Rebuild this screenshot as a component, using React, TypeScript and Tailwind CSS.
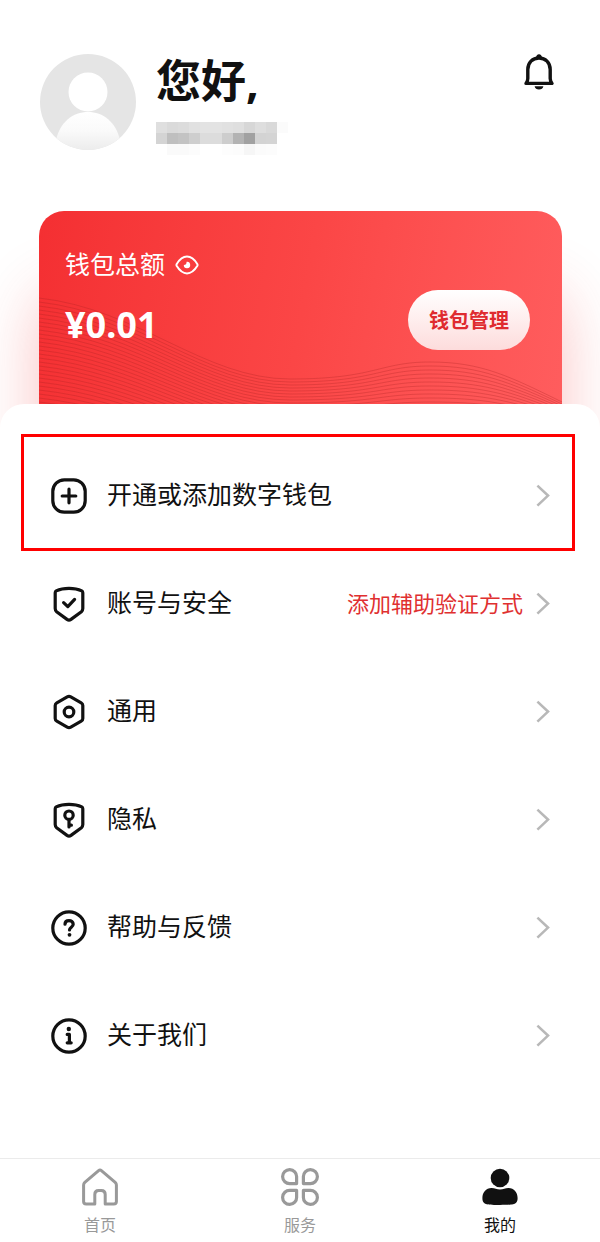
import React from 'react';

const MOSAIC = [
  ['#dfdfdf', '#dadada', '#dcdcdc', '#e1e1e1', '#e3e3e3', '#e3e3e3', '#e1e1e1', '#dfdfdf', '#d7d7d7', '#dedede', '#d9d9d9', '#fbfbfb'],
  ['#d4d4d4', '#bfbfbf', '#c3c3c3', '#cecece', '#dcdcdc', '#dcdcdc', '#cdcdcd', '#b3b3b3', '#a1a1a1', '#d3d3d3', '#d4d4d4', '#ffffff'],
  ['#ffffff', '#fafafa', '#fafafa', '#fcfcfc', '#ffffff', '#ffffff', '#fdfdfd', '#fcfcfc', '#f6f6f6', '#fbfbfb', '#fcfcfc', '#ffffff'],
];

const SHIELD = 'M18 2.3C23 2.3 27.5 3.3 30.8 4.9Q31.8 5.4 31.8 6.8V22.6Q31.8 24.6 30.4 25.7L20 33.4Q18 34.8 16 33.4L5.6 25.7Q4.2 24.6 4.2 22.6V6.8Q4.2 5.4 5.2 4.9C8.5 3.3 13 2.3 18 2.3Z';

const MenuIcon = ({ children }: { children: React.ReactNode }) => (
  <svg
    className="size-9 shrink-0"
    viewBox="0 0 36 36"
    fill="none"
    stroke="currentColor"
    strokeWidth="3.2"
    strokeLinecap="round"
    strokeLinejoin="round"
    aria-hidden="true"
  >
    {children}
  </svg>
);

const menuItems = [
  {
    label: '开通或添加数字钱包',
    highlighted: true,
    icon: (
      <>
        <rect x="1.8" y="1.8" width="32.4" height="32.4" rx="11.5" />
        <path d="M18 11.2V24.8M11.2 18H24.8" />
      </>
    ),
  },
  {
    label: '账号与安全',
    note: '添加辅助验证方式',
    icon: (
      <>
        <path d={SHIELD} />
        <path d="M12.6 16.6L16.8 20.6L23.6 13.4" />
      </>
    ),
  },
  {
    label: '通用',
    icon: (
      <>
        <path d="M16.2 2.9Q18 1.9 19.8 2.9L30.2 8.8Q31.8 9.7 31.8 11.5V24.5Q31.8 26.3 30.2 27.2L19.8 33.1Q18 34.1 16.2 33.1L5.8 27.2Q4.2 26.3 4.2 24.5V11.5Q4.2 9.7 5.8 8.8Z" />
        <circle cx="18" cy="18" r="4.8" />
      </>
    ),
  },
  {
    label: '隐私',
    icon: (
      <>
        <path d={SHIELD} />
        <circle cx="18" cy="13.2" r="4.2" />
        <path d="M18 17.6V25M18.5 23.2H20.4" />
      </>
    ),
  },
  {
    label: '帮助与反馈',
    icon: (
      <>
        <circle cx="18" cy="18" r="16.2" />
        <path d="M14 14.2C14 11.8 15.8 10.6 18 10.6S22.2 12 22.2 14.3C22.2 17.2 18.5 17.2 18.5 20" />
        <circle cx="18.5" cy="24.8" r="1.9" fill="currentColor" stroke="none" />
      </>
    ),
  },
  {
    label: '关于我们',
    icon: (
      <>
        <circle cx="18" cy="18" r="16.2" />
        <circle cx="17.8" cy="11" r="2.2" fill="currentColor" stroke="none" />
        <path d="M16.2 16.4H18.4V24.6M16.2 24.8H20.2" />
      </>
    ),
  },
];

const tabs = [
  {
    label: '首页',
    active: false,
    icon: (
      <path
        d="M17.6 2.6Q19 1.4 20.4 2.6L34.2 14.4Q35.4 15.5 35.4 17V33.4Q35.4 36 32.8 36H24.2V26.4Q24.2 22.4 20.4 22.4H17.6Q13.8 22.4 13.8 26.4V36H5.2Q2.6 36 2.6 33.4V17Q2.6 15.5 3.8 14.4Z"
        fill="none"
        stroke="currentColor"
        strokeWidth="3"
        strokeLinejoin="round"
      />
    ),
  },
  {
    label: '服务',
    active: false,
    icon: (
      <g fill="none" stroke="currentColor" strokeWidth="3.2" strokeLinejoin="round">
        <path d="M15.6 15.6H9A7 7 0 1 1 15.6 9Z" />
        <path d="M22.4 15.6V9A7 7 0 1 1 29 15.6Z" />
        <path d="M15.6 22.4V29A7 7 0 1 1 9 22.4Z" />
        <path d="M22.4 22.4H29A7 7 0 1 1 22.4 29Z" />
      </g>
    ),
  },
  {
    label: '我的',
    active: true,
    icon: (
      <g fill="currentColor">
        <circle cx="19" cy="10" r="9.3" />
        <path d="M10.5 20C14 20 15.5 21.6 19 21.6S24 20 27.5 20C33 20 36.6 24.5 36.6 30C36.6 34 35.2 35.6 32 36.2C28 37.2 10 37.2 6 36.2C2.8 35.6 1.4 34 1.4 30C1.4 24.5 5 20 10.5 20Z" />
      </g>
    ),
  },
];

const Waves = () => (
  <svg
    className="absolute inset-0 size-full"
    viewBox="0 0 523 220"
    preserveAspectRatio="none"
    fill="none"
    stroke="#a82222"
    strokeOpacity="0.3"
    aria-hidden="true"
  >
    {Array.from({ length: 30 }, (_, i) => (
      <path
        key={i}
        d={`M0 ${87 + i * 4}C100 ${98 + i * 4} 165 ${168 + i * 3} 251 ${168 + i * 3}S340 ${151 + i * 4} 391 ${151 + i * 4}S470 ${165 + i * 3} 523 ${191 + i * 2}`}
      />
    ))}
  </svg>
);

const Header = () => (
  <header className="flex items-start px-10 pt-[54px]">
    <svg className="size-24 shrink-0" viewBox="0 0 96 96" role="img" aria-label="头像">
      <defs>
        <linearGradient id="body" x1="0" y1="0" x2="0" y2="1">
          <stop offset="0" stopColor="#ffffff" />
          <stop offset="0.5" stopColor="#fafafa" />
          <stop offset="1" stopColor="#ececec" />
        </linearGradient>
        <clipPath id="round">
          <circle cx="48" cy="48" r="48" />
        </clipPath>
      </defs>
      <g clipPath="url(#round)">
        <rect width="96" height="96" fill="#e5e5e5" />
        <circle cx="48" cy="38" r="19.5" fill="#ffffff" />
        <path d="M16 96V86C20 68 33 58 48 58S76 68 80 86V96Z" fill="url(#body)" />
      </g>
    </svg>
    <div className="ml-5 min-w-0 flex-1">
      <h1 className="font-['Noto_Sans','Noto_Sans_CJK_SC',sans-serif] text-[45px] leading-[54px] font-bold">您好,</h1>
      <div className="mt-3.5 grid w-[132px] grid-cols-12">
        {MOSAIC.flat().map((color, i) => (
          <span key={i} className="h-[11px]" style={{ backgroundColor: color }} />
        ))}
      </div>
    </div>
    <button type="button" aria-label="消息" className="-mr-1 shrink-0">
      <svg className="h-9 w-[50px]" viewBox="0 0 50 36" fill="none" stroke="currentColor" strokeWidth="3.4" strokeLinejoin="round">
        <path d="M12 29.4Q13.8 27 13.8 24.5V15.5C13.8 8.4 18.6 4 25 4S36.2 8.4 36.2 15.5V24.5Q36.2 27 38 29.4Z" />
        <path d="M25 0.2Q27.6 0.4 28.2 4H21.8Q22.4 0.4 25 0.2ZM20.6 32.2H29.4Q28.6 35.4 25 35.4T20.6 32.2Z" fill="currentColor" stroke="none" />
      </svg>
    </button>
  </header>
);

const WalletCard = () => (
  <section className="relative mr-[38px] ml-[39px] mt-14 flex h-[220px] items-start justify-between rounded-[25px] bg-linear-100 from-[#f42f32] via-[#fb4646] to-[#ff5d5e] px-[26px] text-white shadow-[0_84px_64px_0_rgba(240,50,50,0.3)]">
    <Waves />
    <div className="relative pt-[34px]">
      <div className="flex items-center gap-[10px]">
        <h2 className="text-[25px] leading-9">钱包总额</h2>
        <button type="button" aria-label="显示或隐藏金额" className="pt-1">
          <svg className="h-5 w-6" viewBox="0 0 24 20" fill="none" stroke="currentColor" strokeWidth="2" strokeLinecap="round" strokeLinejoin="round">
            <path d="M1.6 9.2C4.5 4.5 7.8 1.6 12 1.6S19.5 4.5 22.4 9.2Q22.8 10 22.4 10.8C19.5 15.5 16.2 18.4 12 18.4S4.5 15.5 1.6 10.8Q1.2 10 1.6 9.2Z" />
            <path d="M11.6 6.8A3.2 3.2 0 1 1 8.8 10Q11.6 10 11.6 6.8Z" fill="currentColor" stroke="none" />
          </svg>
        </button>
      </div>
      <p className="mt-[18px] font-['Noto_Sans','Noto_Sans_CJK_SC',sans-serif] text-[36px] leading-[52px] font-bold">¥0.01</p>
    </div>
    <button
      type="button"
      className="relative mt-[79px] mr-1.5 h-[60px] rounded-full bg-linear-to-b from-white to-[#fddcdc] px-[21px] text-[20px] font-bold text-[#df2b2f]"
    >
      钱包管理
    </button>
  </section>
);

const Menu = () => (
  <main className="relative -mt-[27px] flex-1 rounded-t-3xl bg-white pt-[38px]">
    <ul>
      {menuItems.map((item) => (
        <li key={item.label} className="relative">
          <a href="#" className="flex h-[108px] items-center pr-[49px] pl-[51px]">
            <MenuIcon>{item.icon}</MenuIcon>
            <span className="ml-5 pb-1.5 text-[25px] leading-9">{item.label}</span>
            {item.note && <span className="ml-auto pb-1 text-[22px] leading-8 text-[#e03030]">{item.note}</span>}
            <svg
              className={`h-6 w-4 shrink-0 ${item.note ? 'ml-3' : 'ml-auto'}`}
              viewBox="0 0 16 24"
              fill="none"
              stroke="#b8b8b8"
              strokeWidth="2.6"
              aria-hidden="true"
            >
              <path d="M2.4 1.6L13 11.6L2.4 21.6" />
            </svg>
          </a>
          {item.highlighted && (
            <div className="pointer-events-none absolute -top-2 right-[25px] -bottom-px left-[21px] border-3 border-[#ff0000]" />
          )}
        </li>
      ))}
    </ul>
  </main>
);

const TabBar = () => (
  <nav className="flex h-[84px] border-t border-[#ebebeb] bg-white">
    {tabs.map((tab) => (
      <a
        key={tab.label}
        href="#"
        className={`flex flex-1 flex-col items-center pt-[9px] ${tab.active ? 'text-[#111111]' : 'text-[#999999]'}`}
      >
        <svg className="size-[38px]" viewBox="0 0 38 38" aria-hidden="true">
          {tab.icon}
        </svg>
        <span className="mt-1.5 text-base leading-6">{tab.label}</span>
      </a>
    ))}
  </nav>
);

const App: React.FC = () => {
  return (
    <div className="flex min-h-screen flex-col overflow-hidden bg-white font-['Noto_Sans_CJK_SC',sans-serif] text-[#111111]">
      <Header />
      <WalletCard />
      <Menu />
      <TabBar />
    </div>
  );
};

export default App;
